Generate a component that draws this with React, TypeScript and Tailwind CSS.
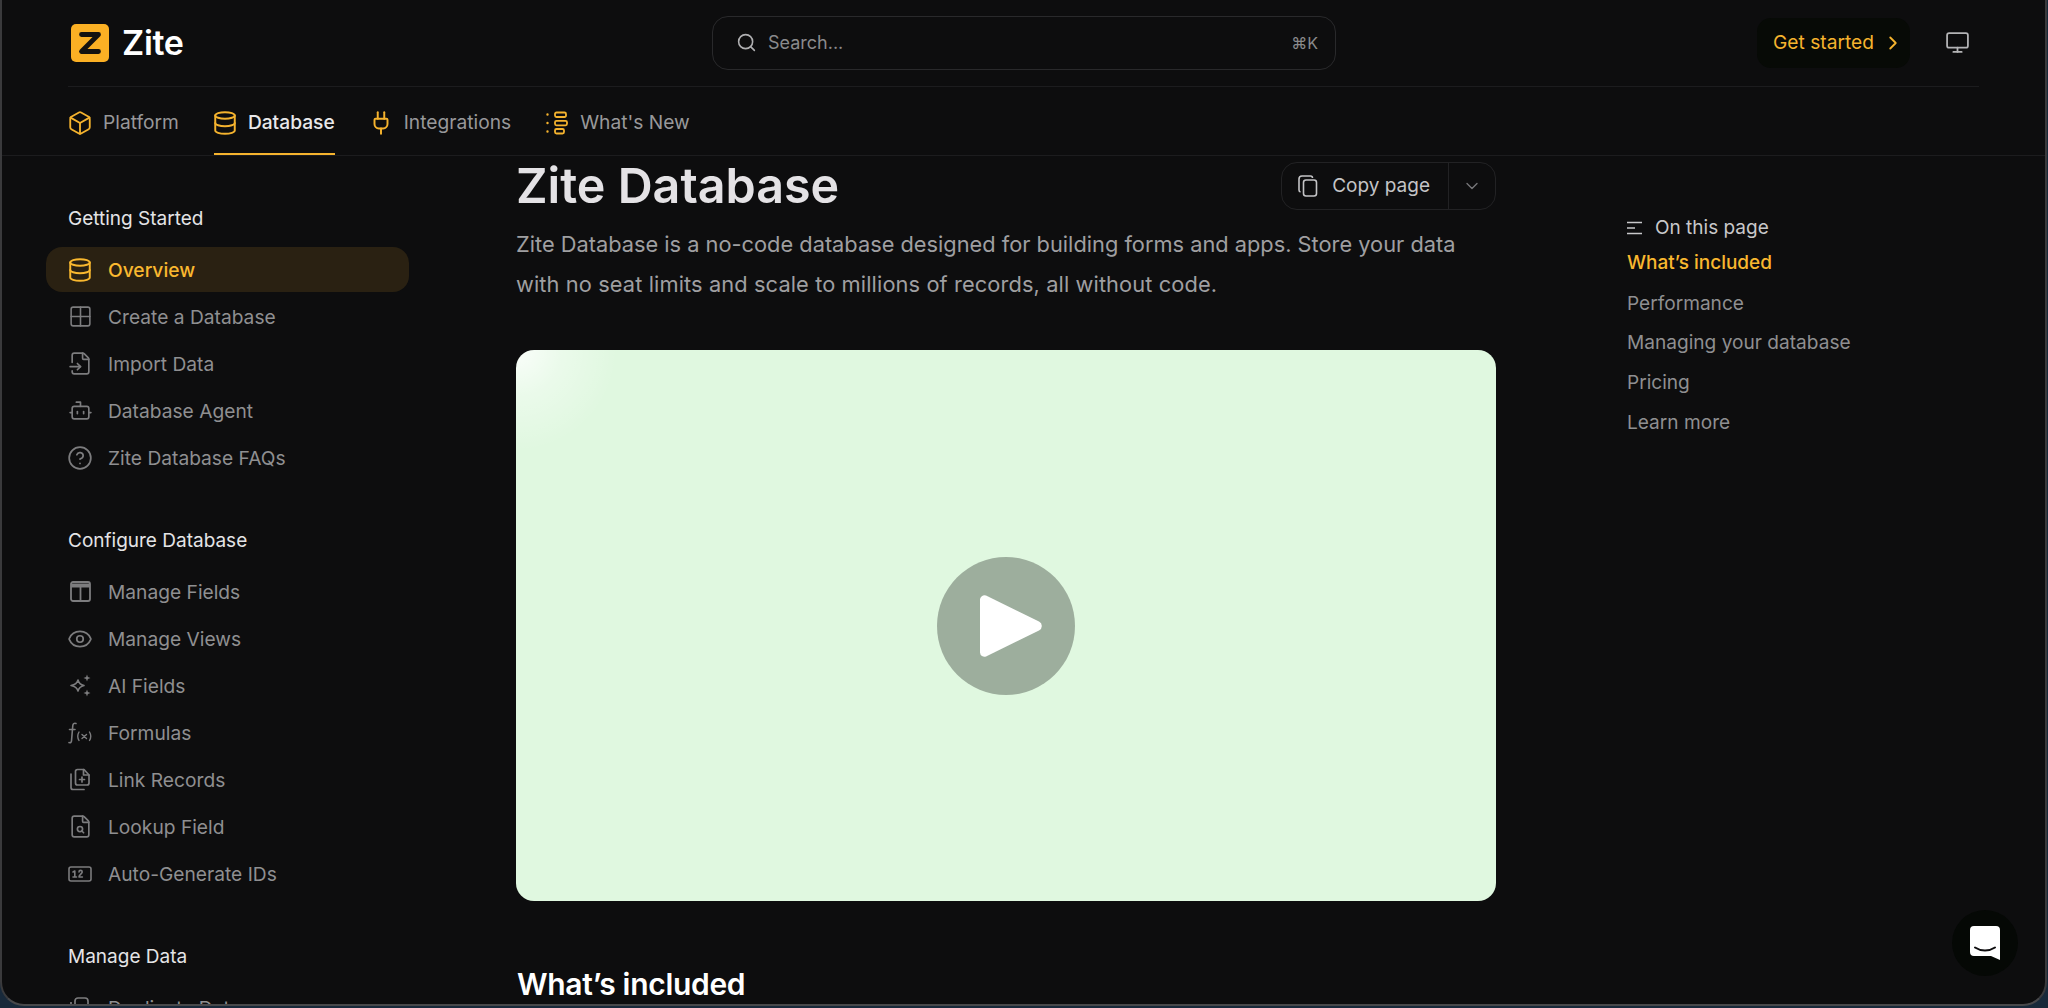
import React from 'react';
import { Box, Database, Plug, Grid2x2, FileInput, Bot, CircleHelp, Eye, FileSearch, Search, ChevronRight, ChevronDown, Monitor } from 'lucide-react';

const IconBox: React.FC<{ children: React.ReactNode; className?: string }> = ({ children, className = '' }) => (
  <span className={`flex h-[22px] w-[22px] shrink-0 items-center justify-center [&>svg]:shrink-0 ${className}`}>{children}</span>
);

const ZiteLogo = () => (
  <svg width="38" height="38" viewBox="0 0 38 38" className="shrink-0">
    <rect width="38" height="38" rx="5" fill="#fbb024" />
    <path d="M10.5 10.5H27.5L10.5 27.5H27.5" fill="none" stroke="#141210" strokeWidth="4.8" strokeLinecap="round" strokeLinejoin="round" />
  </svg>
);

const WhatsNewIcon = () => (
  <svg width="22" height="24" viewBox="0 0 22 24" fill="none" stroke="#f5b32e" strokeWidth="1.8" strokeLinecap="round">
    <path d="M1.5 3.5v.1M1.5 12v.1M1.5 20.5v.1" strokeWidth="2.4" />
    <rect x="9" y="1.5" width="11" height="4.5" rx="1.5" />
    <rect x="9" y="9.8" width="12" height="4.5" rx="1.5" />
    <rect x="9" y="18" width="9" height="4.5" rx="1.5" />
  </svg>
);

const FieldsIcon = () => (
  <svg width="21" height="21" viewBox="0 0 21 21" fill="none" stroke="currentColor" strokeWidth="1.8">
    <rect x="1" y="1" width="19" height="19" rx="2" />
    <path d="M1 4.5h19" strokeWidth="4" />
    <path d="M10.5 5v15" />
  </svg>
);

const AiFieldsIcon = () => (
  <svg width="23" height="23" viewBox="0 0 23 23" fill="none" stroke="currentColor" strokeWidth="1.6" strokeLinejoin="round">
    <path d="M9 6c.7 3 2.3 4.600 6 5.500-3.700.9-5.300 2.500-6 5.500-.7-3-2.300-4.600-7-5.500 4.700-.9 6.300-2.500 7-5.500Z" />
    <path d="M18 .5l.9 2.600 2.600.9-2.600.9-.9 2.600-.9-2.600-2.600-.9 2.600-.9Z" fill="currentColor" stroke="none" />
    <path d="M18 15.500l.9 2.600 2.600.9-2.600.9-.9 2.600-.9-2.600-2.600-.9 2.600-.9Z" fill="currentColor" stroke="none" />
  </svg>
);

const FormulaIcon = () => (
  <svg width="24" height="24" viewBox="0 0 24 24" fill="none" stroke="currentColor" strokeWidth="1.6" strokeLinecap="round">
    <path d="M8 2.500c-2-.6-3 .3-3.200 2L3.500 20c-.2 1.500-1 2-2.500 1.600M1.500 8.500h5.500" />
    <path d="M11 11c-1.500 2.500-1.500 6 0 8.500M21.500 11c1.500 2.500 1.500 6 0 8.500" strokeWidth="1.4" />
    <path d="M14 13.500l4.500 4M18.500 13.500l-4.500 4" strokeWidth="1.4" />
  </svg>
);

const LinkRecordsIcon = () => (
  <svg width="22" height="23" viewBox="0 0 22 23" fill="none" stroke="currentColor" strokeWidth="1.7" strokeLinejoin="round" strokeLinecap="round">
    <path d="M6.5 3.500V15a2 2 0 0 0 2 2H18a2 2 0 0 0 2-2V7l-5-5.500H8.500a2 2 0 0 0-2 2Z" />
    <path d="M14.500 1.500V7H20" />
    <path d="M2 6v13.500a2 2 0 0 0 2 2h11" />
    <path d="M13 9v5M10.500 11.500h5" />
  </svg>
);

const IdsIcon = () => (
  <svg width="24" height="16" viewBox="0 0 24 16" fill="none" stroke="currentColor" strokeWidth="1.6" strokeLinecap="round" strokeLinejoin="round">
    <rect x="1" y="1" width="22" height="14" rx="2" />
    <path d="M5 6l1.800-1v6M5 11h3.500" />
    <path d="M11 6a1.600 1.600 0 0 1 3.200 0c0 1.500-3.200 3-3.200 5h3.400" />
  </svg>
);

const DuplicateIcon = () => (
  <svg width="22" height="24" viewBox="0 0 22 24" fill="none" stroke="currentColor" strokeWidth="1.7">
    <rect x="6" y="2" width="13" height="18" rx="3" />
    <path d="M2 6v12a5 5 0 0 0 3 4" />
  </svg>
);

const CopyIcon = () => (
  <svg width="22" height="22" viewBox="0 0 22 22" fill="none" stroke="#c4c4c6" strokeWidth="1.6">
    <rect x="6.5" y="5" width="13" height="16" rx="2.5" />
    <path d="M15.500 3a2 2 0 0 0-2-2H5a3 3 0 0 0-3 3v11a2 2 0 0 0 1.500 2" />
  </svg>
);

const TocIcon = () => (
  <svg width="16" height="14" viewBox="0 0 16 14" fill="none" stroke="#c8c8ca" strokeWidth="1.6">
    <path d="M0 1.500h15M0 7h8M0 12.500h15" />
  </svg>
);

const tabs = [
  { label: 'Platform', icon: <Box size={26} strokeWidth={1.7} color="#f5b32e" /> },
  { label: 'Database', icon: <Database size={26} strokeWidth={1.8} color="#f5b32e" />, active: true },
  { label: 'Integrations', icon: <Plug size={26} strokeWidth={1.8} color="#f5b32e" /> },
  { label: "What's New", icon: <WhatsNewIcon /> },
];

const sections = [
  {
    title: 'Getting Started',
    items: [
      { label: 'Overview', icon: <Database size={26} strokeWidth={1.8} />, active: true },
      { label: 'Create a Database', icon: <Grid2x2 size={25} strokeWidth={1.5} /> },
      { label: 'Import Data', icon: <FileInput size={25} strokeWidth={1.6} /> },
      { label: 'Database Agent', icon: <Bot size={25} strokeWidth={1.6} /> },
      { label: 'Zite Database FAQs', icon: <CircleHelp size={26} strokeWidth={1.6} /> },
    ],
  },
  {
    title: 'Configure Database',
    items: [
      { label: 'Manage Fields', icon: <FieldsIcon /> },
      { label: 'Manage Views', icon: <Eye size={26} strokeWidth={1.6} /> },
      { label: 'AI Fields', icon: <AiFieldsIcon /> },
      { label: 'Formulas', icon: <FormulaIcon /> },
      { label: 'Link Records', icon: <LinkRecordsIcon /> },
      { label: 'Lookup Field', icon: <FileSearch size={25} strokeWidth={1.6} /> },
      { label: 'Auto-Generate IDs', icon: <IdsIcon /> },
    ],
  },
  {
    title: 'Manage Data',
    items: [{ label: 'Duplicate Data', icon: <DuplicateIcon /> }],
  },
];

const tocLinks = ['Performance', 'Managing your database', 'Pricing', 'Learn more'];

export default function App() {
  return (
    <div className="h-[1008px] w-[2048px] overflow-hidden bg-[#18293a] font-['Inter',sans-serif]">
      <div className="relative flex h-[1006px] w-[2047px] flex-col overflow-hidden rounded-b-[24px] border-x-2 border-b-2 border-x-[#3a3a3c] border-b-[#48484a] bg-[#0d0d0e]">
        <header className="mx-[66px] flex h-[87px] shrink-0 items-center border-b border-[#1c1c1e] pb-[1px] pl-[3px] pr-[9px]">
          <div className="flex w-[641px] items-center gap-[13px]">
            <ZiteLogo />
            <span className="text-[34px] font-semibold tracking-[-0.3px] text-white">Zite</span>
          </div>
          <div className="flex h-[54px] w-[624px] items-center rounded-[16px] border border-[#29292b] pl-[23px] pr-[17px]">
            <Search size={21} strokeWidth={1.8} color="#b0b0b2" />
            <span className="ml-[11px] flex-1 text-[18px] text-[#8a8a8c]">Search...</span>
            <span className="text-[16px] text-[#8a8a8c]">⌘K</span>
          </div>
          <div className="flex flex-1 items-center justify-end gap-[35px]">
            <div className="flex h-[50px] items-center gap-[8px] rounded-[14px] bg-[#070a06] pl-[16px] pr-[6px]">
              <span className="text-[19.2px] text-[#f5b32e]">Get started</span>
              <ChevronRight size={22} strokeWidth={2} color="#f5b32e" />
            </div>
            <Monitor size={25} strokeWidth={1.7} color="#b4b4b6" />
          </div>
        </header>

        <nav className="flex h-[69px] shrink-0 items-stretch gap-[35px] border-b border-[#1c1c1e] pl-[67px]">
          {tabs.map((tab) => (
            <div
              key={tab.label}
              className={`flex items-center gap-[12px] border-b-2 pt-[5px] text-[19.2px] ${
                tab.active ? 'border-[#f5b32e] font-medium text-[#e8e8ea]' : 'border-transparent text-[#98989a]'
              }`}
            >
              <IconBox>{tab.icon}</IconBox>
              <span>{tab.label}</span>
            </div>
          ))}
        </nav>

        <div className="flex min-h-0 flex-1">
          <aside className="w-[514px] shrink-0 pl-[44px] pt-[50px]">
            {sections.map((section) => (
              <section key={section.title} className="mb-[48px] w-[363px]">
                <h3 className="mb-[15px] pl-[22px] text-[19px] font-normal leading-[26px] text-[#e4e4e6]">{section.title}</h3>
                <ul className="flex flex-col gap-[2px]">
                  {section.items.map((item) => (
                    <li
                      key={item.label}
                      className={`flex h-[45px] items-center gap-[17px] rounded-[16px] pl-[23px] text-[19.2px] ${
                        item.active ? 'bg-[#2a2112] font-medium text-[#f9b82f]' : 'text-[#8f8f91]'
                      }`}
                    >
                      <IconBox className={item.active ? '' : 'text-[#7c7c7e]'}>{item.icon}</IconBox>
                      <span className="pt-[2px]">{item.label}</span>
                    </li>
                  ))}
                </ul>
              </section>
            ))}
          </aside>

          <main className="w-[980px] shrink-0 pt-[6px]">
            <div className="flex h-[48px] items-center justify-between">
              <h1 className="text-[48.4px] font-semibold leading-[48px] text-[#e4e2e5]">Zite Database</h1>
              <div className="flex h-[48px] items-center rounded-[16px] border border-[#222224]">
                <div className="flex items-center gap-[13px] pl-[15px] pr-[18px]">
                  <CopyIcon />
                  <span className="text-[19px] text-[#c4c4c6]">Copy page</span>
                </div>
                <div className="flex h-full w-[47px] items-center justify-center border-l border-[#222224]">
                  <ChevronDown size={20} strokeWidth={1.6} color="#77777a" />
                </div>
              </div>
            </div>
            <p className="mt-[14px] text-[21.8px] leading-[40px] text-[#9f9fa1]">
              Zite Database is a no-code database designed for building forms and apps. Store your data
              <br />
              <span className="tracking-[0.11px]">with no seat limits and scale to millions of records, all without code.</span>
            </p>
            <div className="mt-[46px] flex h-[551px] items-center justify-center rounded-[18px] bg-[#e0f8e0] bg-[radial-gradient(circle_at_0%_0%,rgba(255,255,255,0.85)_0%,rgba(255,255,255,0.35)_4%,rgba(255,255,255,0)_9%)]">
              <div className="flex h-[138px] w-[138px] items-center justify-center rounded-full bg-[#9dae9d]">
                <svg width="62" height="64" viewBox="0 0 62 64" className="ml-[9px]">
                  <path d="M6 1.500 59 27.500a5 5 0 0 1 0 9L6 62.500a4.500 4.500 0 0 1-6-4V6a4.500 4.500 0 0 1 6-4.500Z" fill="#fff" />
                </svg>
              </div>
            </div>
            <h2 className="mt-[65px] pl-[1px] text-[30px] font-semibold leading-[36px] tracking-[-0.3px] text-white">What’s included</h2>
          </main>

          <aside className="ml-[131px] flex-1 pt-[60px]">
            <div className="flex h-[24px] items-center gap-[12px] text-[19px] text-[#c8c8ca]">
              <TocIcon />
              <span>On this page</span>
            </div>
            <div className="mt-[3px] flex h-[40px] items-center text-[19px] font-medium text-[#f9b82f]">What’s included</div>
            {tocLinks.map((link) => (
              <div key={link} className="flex h-[39.7px] items-center text-[19.1px] text-[#8f8f91]">
                {link}
              </div>
            ))}
          </aside>
        </div>

        {/* Chat launcher */}
        <div className="absolute bottom-[28px] right-[27px] flex h-[66px] w-[66px] items-center justify-center rounded-full bg-[#050805]">
          <svg width="30" height="34" viewBox="0 0 30 34">
            <path d="M4 0H26a4 4 0 0 1 4 4V34L21 30H4a4 4 0 0 1-4-4V4a4 4 0 0 1 4-4Z" fill="#fff" />
            <path d="M5 21.500c6 4 14 4 20 0" fill="none" stroke="#0e0d0f" strokeWidth="2" strokeLinecap="round" />
          </svg>
        </div>
      </div>
    </div>
  );
}
